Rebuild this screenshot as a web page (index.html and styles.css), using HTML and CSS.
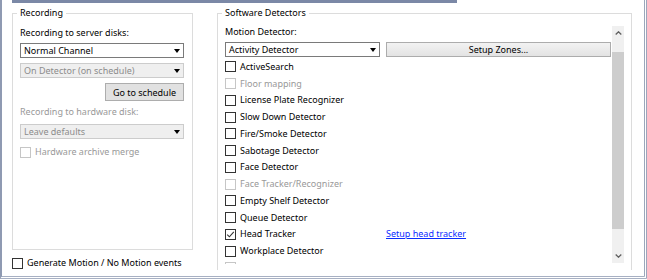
FILE: index.html
```html
<!DOCTYPE html>
<html lang="en">
<head>
  <meta charset="UTF-8" />
  <title>Camera settings</title>
  <link rel="stylesheet" href="styles.css">
</head>
<body>

<div class="window">
  <div class="tabline"></div>
  <div class="frame">

    <div class="left">
      <fieldset class="group rec">
        <legend>Recording</legend>
        <div class="label">Recording to server disks:</div>
        <div class="combo first">Normal Channel<span class="arrow"></span></div>
        <div class="combo off">On Detector (on schedule)<span class="arrow"></span></div>
        <div class="btn-row"><button class="btn">Go to schedule</button></div>
        <div class="label hw off-text">Recording to hardware disk:</div>
        <div class="combo off hw-combo">Leave defaults<span class="arrow"></span></div>
        <div class="check off-text merge"><span class="box off"></span>Hardware archive merge</div>
      </fieldset>
      <div class="check events"><span class="box"></span>Generate Motion / No Motion events</div>
    </div>

    <fieldset class="group detectors">
      <legend>Software Detectors</legend>
      <div class="scroller">
        <div class="scroll-content">
          <div class="label motion">Motion Detector:</div>
          <div class="picker">
            <div class="combo activity">Activity Detector<span class="arrow"></span></div>
            <button class="btn zones">Setup Zones...</button>
          </div>
          <div class="list">
            <div class="check row"><span class="box"></span>ActiveSearch</div>
            <div class="check row off-text"><span class="box off"></span>Floor mapping</div>
            <div class="check row"><span class="box"></span>License Plate Recognizer</div>
            <div class="check row"><span class="box"></span>Slow Down Detector</div>
            <div class="check row"><span class="box"></span>Fire/Smoke Detector</div>
            <div class="check row"><span class="box"></span>Sabotage Detector</div>
            <div class="check row"><span class="box"></span>Face Detector</div>
            <div class="check row off-text"><span class="box off"></span>Face Tracker/Recognizer</div>
            <div class="check row"><span class="box"></span>Empty Shelf Detector</div>
            <div class="check row"><span class="box"></span>Queue Detector</div>
            <div class="row linked">
              <div class="check"><span class="box"><svg width="9" height="9" viewBox="0 0 9 9"><polyline points="1.2,4.6 3.4,6.8 7.8,1.8" fill="none" stroke="#333" stroke-width="1.1"/></svg></span>Head Tracker</div>
              <a class="link" href="#">Setup head tracker</a>
            </div>
            <div class="check row"><span class="box"></span>Workplace Detector</div>
            <!-- next item is scrolled out of view, only the box edge shows -->
            <div class="check row"><span class="box off"></span></div>
          </div>
        </div>
        <div class="scrollbar">
          <div class="sb-btn"><svg width="7" height="4" viewBox="0 0 7 4"><polyline points="0.7,3.5 3.5,0.8 6.3,3.5" fill="none" stroke="#606060" stroke-width="1.3"/></svg></div>
          <div class="sb-gap"></div>
          <div class="thumb"></div>
          <div class="sb-rest"></div>
          <div class="sb-btn"><svg width="7" height="4" viewBox="0 0 7 4"><polyline points="0.7,0.5 3.5,3.2 6.3,0.5" fill="none" stroke="#606060" stroke-width="1.3"/></svg></div>
        </div>
      </div>
    </fieldset>

  </div>
</div>

</body>
</html>
```

FILE: styles.css
```css
body {
  margin: 0;
  background: #fff;
  font-family: "Noto Sans", "Open Sans", sans-serif;
  font-size: 9px;
  color: #000;
}
.window {
  width: 642px;
  height: 276px;
  border-left: 2px solid #8f9ab2;
  border-right: 3px double #9ca6bb;
  border-bottom: 3px double #a7b0c3;
  overflow: hidden;
}
.tabline {
  margin-left: 10px;
  width: 445px;
  height: 3px;
  background: #7b88a6;
}
.frame {
  display: flex;
  align-items: flex-start;
  padding: 4px 0 0 10px;
}
.group {
  margin: 0;
  border: 1px solid #dcdcdc;
  box-sizing: border-box;
}
.group legend {
  padding: 0 3px;
  margin-left: -3px;
  line-height: 12px;
}
.left {
  display: flex;
  flex-direction: column;
  width: 181px;
}
.rec {
  width: 181px;
  height: 243px;
  padding: 7px 8px 0 7px;
}
.label {
  line-height: 14px;
}
.off-text {
  color: #999;
}
.combo {
  display: flex;
  align-items: center;
  justify-content: space-between;
  height: 15px;
  box-sizing: border-box;
  border: 1px solid #7a7a7a;
  background: #fff;
  padding: 0 3px 0 3px;
  line-height: 13px;
  white-space: nowrap;
}
.combo.off {
  border-color: #cccccc;
  background: #efefef;
  color: #8c8c8c;
}
.arrow {
  width: 0;
  height: 0;
  border-left: 3.5px solid transparent;
  border-right: 3.5px solid transparent;
  border-top: 4px solid #000;
}
.first {
  margin-top: 3px;
}
.rec .combo.off {
  margin-top: 5px;
}
.btn-row {
  display: flex;
  justify-content: flex-end;
  margin-top: 5px;
}
.btn {
  font-family: inherit;
  font-size: 9px;
  color: #000;
  padding: 0;
  box-sizing: border-box;
  border: 1px solid #adadad;
  background: #e1e1e1;
}
.btn-row .btn {
  width: 79px;
  height: 18px;
}
.label.hw {
  margin-top: 4px;
}
.rec .hw-combo {
  margin-top: 4px;
}
.check {
  display: flex;
  align-items: center;
  gap: 4px;
  line-height: 14px;
  white-space: nowrap;
}
.box {
  display: flex;
  align-items: center;
  justify-content: center;
  width: 11px;
  height: 11px;
  box-sizing: border-box;
  border: 1px solid #333;
  background: #fff;
  flex: none;
}
.box.off {
  border-color: #c6c6c6;
}
.merge {
  margin-top: 6px;
}
.events {
  margin-top: 6px;
}
.detectors {
  margin-left: 24px;
  width: 415px;
  height: 263px;
  padding: 7px 7px 0 7px;
  border-bottom: none;
}
.scroller {
  display: flex;
  height: 238px;
  overflow: hidden;
}
.scroll-content {
  flex: 1;
  padding-right: 1px;
  overflow: hidden;
}
.label.motion {
  line-height: 12px;
}
.picker {
  display: flex;
  gap: 6px;
  margin-top: 4px;
}
.activity {
  width: 155px;
}
.zones {
  flex: 1;
  height: 15px;
  border-color: #acacac;
  background: linear-gradient(#f2f2f2, #e3e3e3);
  line-height: 13px;
}
.list {
  margin-top: 1.5px;
}
.row {
  height: 16.75px;
}
.linked {
  display: grid;
  grid-template-columns: 161px 1fr;
  align-items: center;
}
.link {
  color: #0b2cff;
  text-decoration: underline;
  line-height: 14px;
}
.scrollbar {
  display: flex;
  flex-direction: column;
  width: 12px;
  height: 237px;
  background: #f0f0f0;
}
.sb-btn {
  display: flex;
  align-items: center;
  justify-content: center;
  height: 14px;
}
.sb-gap {
  height: 12px;
}
.thumb {
  height: 177px;
  background: #cdcdcd;
}
.sb-rest {
  flex: 1;
}
```
